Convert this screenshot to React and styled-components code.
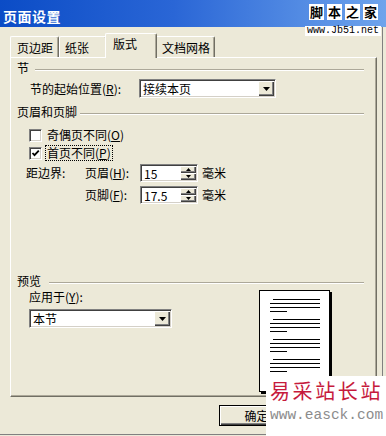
import React from 'react';
import styled, { createGlobalStyle } from 'styled-components';

const FONT = `"Noto Sans CJK SC", "Noto Sans", sans-serif`;

const Global = createGlobalStyle`
  html, body { margin: 0; padding: 0; background: #ece9d8; }
  body { font-family: ${FONT}; font-size: 12px; color: #000; }
`;

const Window = styled.div`
  position: relative;
  width: 386px;
  height: 436px;
  box-sizing: border-box;
  background: #ece9d8;
  display: flex;
  flex-direction: column;
  overflow: hidden;
  box-shadow: inset -3px -1px 0 #ece9d8, inset -4px -2px 0 #808080;
`;

const TitleBar = styled.div`
  height: 27px;
  box-sizing: border-box;
  padding: 4px 0 0 3px;
  display: flex;
  align-items: center;
  background: linear-gradient(90deg, #0b4cc6 0%, #2a66d6 45%, #6ea4ec 100%);
`;

const Title = styled.span`
  color: #fff;
  font-weight: bold;
  font-size: 14px;
  letter-spacing: 0.5px;
`;

const Body = styled.div`
  display: flex;
  flex-direction: column;
  padding: 6px 9px 0 10px;
`;

const TabRow = styled.div`
  display: flex;
  align-items: flex-end;
  height: 24px;
`;

const Tab = styled.div`
  position: relative;
  z-index: ${p => (p.$sel ? 2 : 1)};
  box-sizing: border-box;
  width: ${p => p.$w}px;
  height: ${p => (p.$sel ? 25 : 21)}px;
  margin: 0 ${p => (p.$sel ? -2 : 0)}px ${p => (p.$sel ? -1 : 0)}px ${p => (p.$sel ? -2 : 0)}px;
  padding: ${p => (p.$sel ? 3 : 4)}px 0 0 ${p => p.$pl}px;
  line-height: 14px;
  background: #ece9d8;
  border-top: 1px solid #fff;
  border-left: 1px solid #fff;
  border-right: 1px solid #716f64;
  border-radius: 2px 2px 0 0;
  box-shadow: inset -1px 0 0 #aca899;
  white-space: nowrap;
`;

const Panel = styled.div`
  box-sizing: border-box;
  height: 340px;
  border: 1px solid;
  border-color: #fff #716f64 #716f64 #fff;
  box-shadow: inset -1px -1px 0 #aca899;
  padding: 3px 12px 0 6px;
  display: flex;
  flex-direction: column;
`;

const GroupHeader = styled.div`
  display: flex;
  align-items: center;
  height: 14px;
  line-height: 14px;
  margin-top: ${p => p.$mt || 0}px;
  white-space: nowrap;
`;

const Rule = styled.div`
  flex: 1;
  height: 0;
  margin: 3px 0 0 ${p => p.$ml || 5}px;
  border-top: 1px solid #aca899;
  border-bottom: 1px solid #fff;
`;

const FieldRow = styled.div`
  display: flex;
  align-items: center;
  height: 19px;
  margin-top: 4px;
  padding-left: 13px;
`;

const Label = styled.span`
  display: inline-block;
  width: ${p => (p.$w ? `${p.$w}px` : 'auto')};
  line-height: 14px;
  white-space: nowrap;
`;

const Key = styled.u`
  text-decoration: underline;
`;

const Sunken = styled.div`
  box-sizing: border-box;
  display: flex;
  align-items: stretch;
  width: ${p => p.$w}px;
  height: ${p => p.$h}px;
  background: #fff;
  border: 1px solid;
  border-color: #808080 #fff #fff #808080;
  box-shadow: inset 1px 1px 0 #404040, inset -1px -1px 0 #d4d0c8;
  padding: 1px;
`;

const Value = styled.div`
  flex: 1;
  padding-left: 2px;
  line-height: 15px;
  white-space: nowrap;
`;

const DropBtn = styled.div`
  box-sizing: border-box;
  width: 16px;
  display: flex;
  align-items: center;
  justify-content: center;
  background: #ece9d8;
  box-shadow: inset 1px 1px 0 #fff, inset -1px -1px 0 #404040, inset -2px -2px 0 #808080;
`;

const SpinCol = styled.div`
  width: 16px;
  display: flex;
  flex-direction: column;
`;

const SpinBtn = styled.div`
  flex: 1;
  display: flex;
  align-items: center;
  justify-content: center;
  background: #ece9d8;
  box-shadow: inset 1px 1px 0 #fff, inset -1px -1px 0 #404040, inset -2px -2px 0 #808080;
`;

const CheckRow = styled.div`
  display: flex;
  align-items: center;
  height: 18px;
  margin-top: ${p => p.$mt || 0}px;
  padding-left: 12px;
`;

const Box = styled.div`
  box-sizing: border-box;
  width: 13px;
  height: 13px;
  background: #fff;
  border: 1px solid;
  border-color: #808080 #fff #fff #808080;
  box-shadow: inset 1px 1px 0 #404040, inset -1px -1px 0 #d4d0c8;
  display: flex;
  align-items: center;
  justify-content: center;
  margin-right: 4px;
`;

const CheckText = styled.span`
  line-height: 14px;
  padding: 0 1px;
  outline: ${p => (p.$focus ? '1px dotted #000' : 'none')};
  outline-offset: 0px;
  white-space: nowrap;
`;

const SpinGrid = styled.div`
  display: grid;
  grid-template-columns: 59px 55px 58px auto;
  align-items: center;
  height: 18px;
  margin-top: ${p => p.$mt}px;
  padding-left: 9px;
`;

const Unit = styled.span`
  padding-left: 4px;
  line-height: 14px;
`;

const PreviewRow = styled.div`
  display: flex;
  align-items: flex-start;
`;

const ApplyCol = styled.div`
  display: flex;
  flex-direction: column;
  padding-left: 12px;
  gap: 5px;
  padding-top: 2px;
`;

const Page = styled.div`
  box-sizing: border-box;
  width: 71px;
  height: 102px;
  margin: 2px 0 0 87px;
  background: #fff;
  border: 1px solid #000;
  box-shadow: 2px 2px 0 #000;
`;

const Footer = styled.div`
  display: flex;
  justify-content: flex-end;
  margin-top: 8px;
  padding-right: 83px;
`;

const Button = styled.div`
  box-sizing: border-box;
  width: 75px;
  height: 21px;
  display: flex;
  align-items: center;
  justify-content: center;
  background: #ece9d8;
  border: 1px solid #000;
  box-shadow: inset 1px 1px 0 #fff, inset -1px -1px 0 #404040, inset -2px -2px 0 #808080;
  line-height: 14px;
`;

const MarkTop = styled.div`
  position: absolute;
  top: 4px;
  right: 8px;
  display: flex;
  gap: 3px;
`;

const MarkBox = styled.span`
  width: 15px;
  height: 16px;
  background: #fff;
  color: #000;
  font-weight: bold;
  font-size: 13px;
  line-height: 16px;
  text-align: center;
`;

const MarkUrl = styled.div`
  position: absolute;
  top: 26px;
  left: 305px;
  padding: 0 2px;
  background: #fff;
  font-family: "Liberation Mono", "DejaVu Sans Mono", monospace;
  font-size: 10px;
  line-height: 10px;
  color: #000;
`;

const MarkBottom = styled.div`
  position: absolute;
  right: 0;
  bottom: 0;
  width: 120px;
  height: 60px;
  background: #fff;
  display: flex;
  flex-direction: column;
  padding: 3px 0 0 4px;
  box-sizing: border-box;
`;

const MarkRed = styled.div`
  color: #c61a3c;
  font-size: 20px;
  line-height: 24px;
  letter-spacing: 2.6px;
  white-space: nowrap;
`;

const MarkGrey = styled.div`
  margin-top: 3px;
  color: #8c8c8c;
  font-family: "Liberation Mono", "DejaVu Sans Mono", monospace;
  font-size: 14.5px;
  line-height: 18px;
  white-space: nowrap;
`;

const Down = () => (
  <svg width="7" height="4" viewBox="0 0 7 4"><path d="M0 0H7L3.5 4Z" fill="#000" /></svg>
);
const SmallUp = () => (
  <svg width="5" height="3" viewBox="0 0 5 3"><path d="M0 3H5L2.5 0Z" fill="#000" /></svg>
);
const SmallDown = () => (
  <svg width="5" height="3" viewBox="0 0 5 3"><path d="M0 0H5L2.5 3Z" fill="#000" /></svg>
);

const Select = ({ w, value }) => (
  <Sunken $w={w} $h={19}>
    <Value>{value}</Value>
    <DropBtn><Down /></DropBtn>
  </Sunken>
);

const Spinner = ({ value }) => (
  <Sunken $w={58} $h={18}>
    <Value>{value}</Value>
    <SpinCol>
      <SpinBtn><SmallUp /></SpinBtn>
      <SpinBtn><SmallDown /></SpinBtn>
    </SpinCol>
  </Sunken>
);

const PageLines = () => {
  const lines = [];
  for (let g = 0; g < 4; g++) {
    const y0 = 8.5 + g * 20;
    lines.push(<line key={`a${g}`} x1="13" x2="60" y1={y0} y2={y0} />);
    lines.push(<line key={`b${g}`} x1="10" x2="60" y1={y0 + 4} y2={y0 + 4} />);
    lines.push(<line key={`c${g}`} x1="10" x2="60" y1={y0 + 8} y2={y0 + 8} />);
    lines.push(<line key={`d${g}`} x1="10" x2="27" y1={y0 + 12} y2={y0 + 12} />);
  }
  return (
    <svg width="69" height="100" viewBox="0 0 69 100" stroke="#000" strokeWidth="1">
      {lines}
    </svg>
  );
};

const tabs = [
  { t: '页边距', w: 49, pl: 6 },
  { t: '纸张', w: 48, pl: 5 },
  { t: '版式', w: 52, pl: 7, sel: true },
  { t: '文档网格', w: 60, pl: 6 },
];

export default function App() {
  return (
    <>
      <Global />
      <Window>
        <TitleBar><Title>页面设置</Title></TitleBar>
        <Body>
          <TabRow>
            {tabs.map(tb => (
              <Tab key={tb.t} $w={tb.w} $pl={tb.pl} $sel={tb.sel}>{tb.t}</Tab>
            ))}
          </TabRow>
          <Panel>
            <GroupHeader>节<Rule $ml={6} /></GroupHeader>
            <FieldRow>
              <Label $w={109}>节的起始位置(<Key>R</Key>):</Label>
              <Select w={137} value="接续本页" />
            </FieldRow>

            <GroupHeader $mt={7}>页眉和页脚<Rule $ml={3} /></GroupHeader>
            <CheckRow $mt={7}>
              <Box />
              <CheckText>奇偶页不同(<Key>O</Key>)</CheckText>
            </CheckRow>
            <CheckRow>
              <Box>
                <svg width="9" height="9" viewBox="0 0 9 9">
                  <path d="M1.5 4 L3.5 6.2 L7.8 1.6" fill="none" stroke="#000" strokeWidth="1.8" />
                </svg>
              </Box>
              <CheckText $focus>首页不同(<Key>P</Key>)</CheckText>
            </CheckRow>
            <SpinGrid $mt={2}>
              <Label>距边界:</Label>
              <Label>页眉(<Key>H</Key>):</Label>
              <Spinner value="15" />
              <Unit>毫米</Unit>
            </SpinGrid>
            <SpinGrid $mt={4}>
              <span />
              <Label>页脚(<Key>F</Key>):</Label>
              <Spinner value="17.5" />
              <Unit>毫米</Unit>
            </SpinGrid>

            <GroupHeader $mt={70}>预览<Rule $ml={8} /></GroupHeader>
            <PreviewRow>
              <ApplyCol>
                <Label>应用于(<Key>Y</Key>):</Label>
                <Select w={143} value="本节" />
              </ApplyCol>
              <Page><PageLines /></Page>
            </PreviewRow>
          </Panel>
          <Footer>
            <Button>确定</Button>
          </Footer>
        </Body>

        <MarkTop>
          {['脚', '本', '之', '家'].map(c => <MarkBox key={c}>{c}</MarkBox>)}
        </MarkTop>
        <MarkUrl>www.Jb51.net</MarkUrl>
        <MarkBottom>
          <MarkRed>易采站长站</MarkRed>
          <MarkGrey>www.easck.com</MarkGrey>
        </MarkBottom>
      </Window>
    </>
  );
}
